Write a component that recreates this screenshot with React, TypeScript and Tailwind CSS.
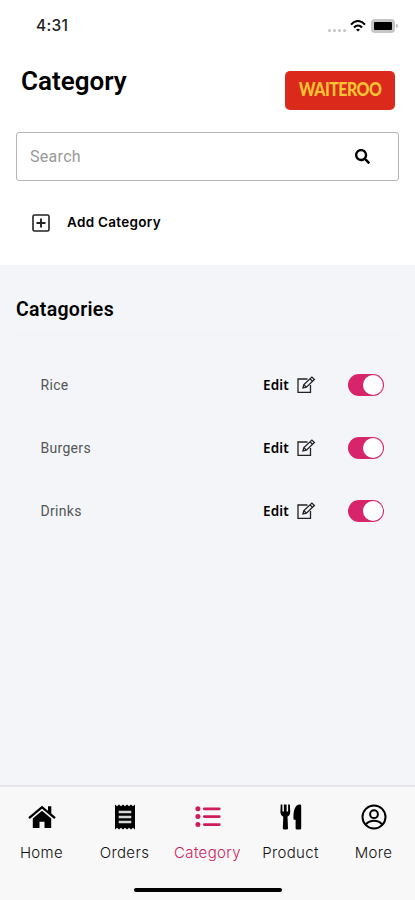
import React, { useState } from 'react';
import { FaSearch } from 'react-icons/fa';

interface Category {
  id: number;
  name: string;
  enabled: boolean;
}

const initialCategories: Category[] = [
  { id: 1, name: 'Rice', enabled: true },
  { id: 2, name: 'Burgers', enabled: true },
  { id: 3, name: 'Drinks', enabled: true },
];

const StatusBar: React.FC = () => (
  <div className="flex h-[52px] items-center justify-between pl-9 pr-[17px] font-['Inter',sans-serif]">
    <span className="text-[15.5px] font-medium tracking-[0.3px] text-[#222]">4:31</span>
    <div className="flex items-center">
      <div className="mr-1 mt-2 flex gap-[2px]">
        {[0, 1, 2, 3].map((dot) => (
          <span key={dot} className="h-[3px] w-[3px] rounded-full bg-[#c4c4c4]" />
        ))}
      </div>
      <svg viewBox="0 0 16 12" className="mr-[5px] h-3 w-4" fill="none" stroke="#000" strokeWidth="2.1">
        <path d="M1 4.6C5-.2 11-.2 15 4.6" />
        <path d="M4 7.5c2.4-2.7 5.6-2.7 8 0" />
        <path d="M6 9.7c1.2-1.2 2.8-1.2 4 0L8 11.5z" fill="#000" stroke="none" />
      </svg>
      <div className="flex h-[14px] w-6 items-center rounded-[4px] bg-[#c6c6c6] p-[3px]">
        <span className="h-full w-full rounded-[1px] bg-black" />
      </div>
      <span className="ml-px h-1 w-[2px] rounded-r bg-[#c0c0c0]" />
    </div>
  </div>
);

const EditIcon: React.FC = () => (
  <svg viewBox="0 0 20 18" className="h-[18px] w-5" fill="none" stroke="#222" strokeWidth="1.3">
    <path d="M11.5 3H2v13.3h12.5V9" />
    <path d="M7 11.8l.9-3.2L15.9 1.1l2.5 2.4-8 7.6z" />
    <path d="M14 2.9l2.5 2.4M8 8.6l2.4 2.5" />
  </svg>
);

const HomeIcon: React.FC = () => (
  <svg viewBox="0 0 28 26" className="h-[26px] w-7" fill="currentColor">
    <path d="M1 14.2L14 3.2l13 11" fill="none" stroke="currentColor" strokeWidth="2.4" />
    <path d="M20 2.2h3.3v8.3L20 7.7z" />
    <path d="M14 6.8l9.2 7.8v9.4h-6.7v-6.200h-5V24H4.800v-9.400z" />
  </svg>
);

const OrdersIcon: React.FC = () => (
  <svg viewBox="0 0 20 26" className="h-[26px] w-5">
    <path d="M0 .5l2 1.8L4 .5l2 1.8L8 .5l2 1.8L12 .5l2 1.8L16 .5l2 1.8L20 .5v25l-2-1.8-2 1.8-2-1.8-2 1.8-2-1.8-2 1.8-2-1.8-2 1.8-2-1.8-2 1.8z" />
    <path d="M3.7 8h12.6M3.7 13h12.6M3.7 18h12.6" stroke="#d3d8d5" strokeWidth="2.4" />
  </svg>
);

const ListIcon: React.FC = () => (
  <svg viewBox="0 0 26 24" className="h-6 w-[26px]" fill="currentColor">
    <circle cx="2.9" cy="3.8" r="2.5" />
    <circle cx="2.9" cy="11.6" r="2.5" />
    <circle cx="2.9" cy="19.6" r="2.5" />
    <path d="M9.3 3.8h15M9.3 11.6h15M9.3 19.6h15" stroke="currentColor" strokeWidth="2.8" strokeLinecap="round" />
  </svg>
);

const UtensilsIcon: React.FC = () => (
  <svg viewBox="0 0 22 26" className="h-[26px] w-[22px]">
    <path d="M.7.6h1.7v7h1.500v-7h2.700v7h1.500v-7h1.800l.3 8q0 3-2.700 4.200l.5 11.400q0 1.300-1.300 1.300H4.100q-1.300 0-1.300-1.300l.5-11.400Q.5 11.600.4 8.600z" />
    <path d="M20 .6q1.200 0 1.200 1.200v22.500q0 1.200-1.200 1.200h-3.100q-1.300 0-1.300-1.300v-8.400h-1.500q-.7 0-.6-1C13.300 7 14.800.6 20 .6z" />
  </svg>
);

const AccountIcon: React.FC = () => (
  <svg viewBox="0 0 26 26" className="h-[26px] w-[26px]" fill="none" stroke="currentColor" strokeWidth="2">
    <circle cx="13" cy="13" r="11.5" />
    <circle cx="13" cy="10.2" r="3.9" />
    <path d="M5 20.3c4.2-4.6 11.8-4.6 16 0" />
  </svg>
);

interface ToggleProps {
  checked: boolean;
  onChange: () => void;
}

const Toggle: React.FC<ToggleProps> = ({ checked, onChange }) => (
  <button
    role="switch"
    aria-checked={checked}
    onClick={onChange}
    className={`flex h-[22px] w-9 items-center rounded-full p-px ${
      checked ? 'justify-end bg-[#d8246a]' : 'justify-start bg-gray-300'
    }`}
  >
    <span className="h-5 w-5 rounded-full bg-white" />
  </button>
);

interface NavItemProps {
  label: string;
  active?: boolean;
  children: React.ReactNode;
}

const NavItem: React.FC<NavItemProps> = ({ label, active, children }) => (
  <button className={`flex w-[83px] flex-col items-center ${active ? 'text-[#cc1d5d]' : 'text-black'}`}>
    <span className="flex h-[30px] items-center">{children}</span>
    <span
      className={`mt-[11px] text-[15px] font-light leading-5 tracking-[0.35px] ${active ? '' : 'text-[#111]'}`}
    >
      {label}
    </span>
  </button>
);

export default function App() {
  const [categories, setCategories] = useState(initialCategories);

  const toggleCategory = (id: number) => {
    setCategories((prev) => prev.map((c) => (c.id === id ? { ...c, enabled: !c.enabled } : c)));
  };

  return (
    <div className="flex h-[900px] w-[415px] flex-col overflow-hidden bg-white font-['Roboto',sans-serif] text-black">
      <header className="h-[265px] shrink-0">
        <StatusBar />
        <div className="flex h-[76px] items-center justify-between pl-[21px] pr-5">
          <h1 className="-mt-[18px] text-[26px] font-semibold">Category</h1>
          <div className="flex h-[39px] w-[110px] items-center justify-center rounded-[5px] bg-[#db291c]">
            <span className="scale-x-[0.86] font-['Lato',sans-serif] text-[18.5px] font-black tracking-[-0.6px] text-[#fcc332]">
              WAITEROO
            </span>
          </div>
        </div>
        <div className="mx-4 mt-1 flex h-[49px] items-center justify-between rounded-[3px] border border-[#b5b5b5] pl-[13px] pr-7">
          <input
            className="w-60 bg-transparent text-base tracking-[0.3px] outline-none placeholder:text-[#999]"
            placeholder="Search"
          />
          <FaSearch className="h-[15px] w-[15px]" />
        </div>
        <button className="ml-8 mt-[31px] flex items-center gap-[17px]">
          <svg viewBox="0 0 18 18" className="mt-[2px] h-[18px] w-[18px]" fill="none" stroke="#222">
            <rect x="1" y="1" width="16" height="16" rx="1.5" strokeWidth="1.6" />
            <path d="M9 4.5v9M4.5 9h9" strokeWidth="1.9" />
          </svg>
          <span className="font-['Inter',sans-serif] text-[13.5px] font-semibold leading-5 tracking-[0.3px]">
            Add Category
          </span>
        </button>
      </header>

      <main className="flex-1 bg-[#f3f5f9]">
        <h2 className="mx-4 h-[65px] border-b border-[#f6f8fb] pt-[31px] text-[19.5px] font-semibold leading-7 tracking-[0.3px]">
          Catagories
        </h2>
        <ul className="mt-[23px]">
          {categories.map((category) => (
            <li key={category.id} className="flex h-[63.4px] items-center pl-[40.5px] pr-[31px]">
              <span className="flex-1 text-sm tracking-[0.3px] text-[#555]">{category.name}</span>
              <button className="mr-8 flex items-center gap-[7px] font-['Noto_Sans',sans-serif] text-[13.5px] font-semibold tracking-[0.2px]">
                Edit
                <EditIcon />
              </button>
              <Toggle checked={category.enabled} onChange={() => toggleCategory(category.id)} />
            </li>
          ))}
        </ul>
      </main>

      <footer className="flex h-[115px] shrink-0 flex-col items-center border-t-2 border-[#e5e6e9] bg-[#f8f8f8] font-['Inter',sans-serif]">
        <nav className="mt-[15px] flex w-full">
          <NavItem label="Home">
            <HomeIcon />
          </NavItem>
          <NavItem label="Orders">
            <OrdersIcon />
          </NavItem>
          <NavItem label="Category" active>
            <ListIcon />
          </NavItem>
          <NavItem label="Product">
            <UtensilsIcon />
          </NavItem>
          <NavItem label="More">
            <AccountIcon />
          </NavItem>
        </nav>
        <div className="mt-[25px] h-1 w-[148px] rounded-full bg-black" />
      </footer>
    </div>
  );
}
